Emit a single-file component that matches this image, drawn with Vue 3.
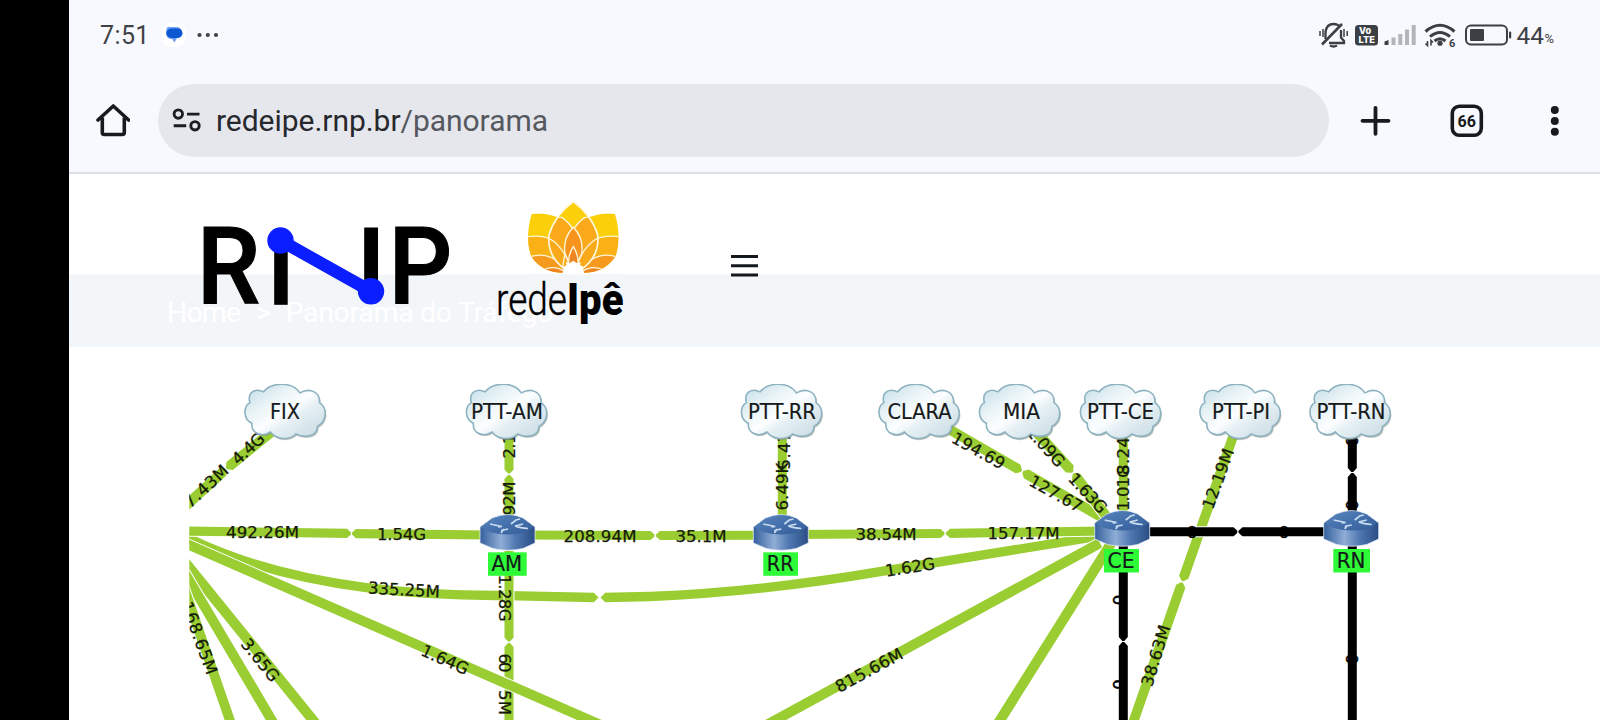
<script setup>
const clouds = [
  { x: 245, label: 'FIX', cx: 285, w: 30 },
  { x: 466.5, label: 'PTT-AM', cx: 507, w: 72 },
  { x: 741.5, label: 'PTT-RR', cx: 782, w: 68 },
  { x: 879, label: 'CLARA', cx: 919.5, w: 64 },
  { x: 979.5, label: 'MIA', cx: 1021.5, w: 37 },
  { x: 1080.5, label: 'PTT-CE', cx: 1120.5, w: 67 },
  { x: 1200, label: 'PTT-PI', cx: 1241, w: 58 },
  { x: 1310, label: 'PTT-RN', cx: 1351, w: 69 },
]

const routers = [
  { x: 480, y: 514, label: 'AM', lx: 488, ly: 552.3, lw: 38.7 },
  { x: 753.3, y: 514, label: 'RR', lx: 763.3, ly: 552.3, lw: 34.7 },
  { x: 1094.7, y: 510, label: 'CE', lx: 1104, ly: 549, lw: 35 },
  { x: 1323.7, y: 510, label: 'RN', lx: 1333.3, ly: 549, lw: 36.7 },
]

// One half of a link: a bar that runs from its node and ends in a blunt arrow.
function half(x1, y1, x2, y2, tip = 4) {
  const len = Math.hypot(x2 - x1, y2 - y1)
  const ux = (x2 - x1) / len
  const uy = (y2 - y1) / len
  const w = 4.5 + Math.abs(ux * uy) * 1.2
  const bx = x2 - ux * tip
  const by = y2 - uy * tip
  const e = tip ? 1 : w
  return [
    [x1 - uy * w, y1 + ux * w],
    [bx - uy * w, by + ux * w],
    [x2 - uy * e, y2 + ux * e],
    [x2 + uy * e, y2 - ux * e],
    [bx + uy * w, by - ux * w],
    [x1 + uy * w, y1 - ux * w],
  ].map((p) => p.map((n) => n.toFixed(1)).join(',')).join(' ')
}

const underHalves = [
  half(509, 551, 509, 641.5), half(509, 730, 509, 643),
]
const underLabels = [
  { t: '1.28G', x: 505, y: 598, a: 90, w: 47 },
  { t: '60', x: 505, y: 663, a: 90, w: 19 },
  { t: '5M', x: 505, y: 702.5, a: 90, w: 25 },
]
const greenHalves = [
  half(180, 511, 226, 469), half(275, 429, 226.5, 468.5),
  half(180, 531, 351, 533.4), half(490, 535, 352, 533.6),
  half(520, 535, 654.5, 535.5), half(770, 535.2, 656, 535.5),
  half(790, 534.5, 944.5, 533.5), half(1105, 531, 946, 533.4),
  half(180, 541, 610, 729, 0),
  half(176, 551, 325, 735, 0),
  half(176, 558, 281, 736, 0),
  half(182, 582, 236, 738, 0),
  half(1100, 543, 750, 734, 0),
  half(1112, 542, 992, 733, 0),
  half(940, 424, 1021.5, 471), half(1110, 522, 1022.8, 472),
  half(1030, 425, 1072.5, 472), half(1113, 525, 1073.5, 473.5),
  half(509, 430, 509, 473.5), half(509, 520, 509, 475),
  half(782.3, 430, 782.3, 520, 0),
  half(1123.3, 430, 1123.3, 520, 0),
  half(1235, 431, 1182.5, 581), half(1128, 737, 1182, 582.5),
]
const blackHalves = [
  half(1352.3, 430, 1352.3, 472), half(1352.3, 520, 1352.3, 473),
  half(1352.3, 540, 1352.3, 730, 0),
  half(1123.3, 540, 1123.3, 641), half(1123.3, 730, 1123.3, 642),
  half(1140, 531.7, 1237.5, 531.7), half(1330, 531.7, 1238.5, 531.7),
]

const zeroLabels = [
  { x: 1118.5, y: 600, a: 90 }, { x: 1118.5, y: 684.5, a: 90 },
  { x: 1192, y: 531.7, a: 0 }, { x: 1284, y: 531.7, a: 0 },
  { x: 1352.3, y: 441, a: 90 }, { x: 1352.3, y: 505, a: 90 },
  { x: 1352.3, y: 659, a: 90 },
]

const flowLabels = [
  { t: '7.43M', x: 206, y: 486, a: -43, w: 54 },
  { t: '4.4G', x: 248, y: 448.5, a: -43, w: 38 },
  { t: '492.26M', x: 262.5, y: 532, a: 0, w: 73 },
  { t: '1.54G', x: 401.5, y: 534, a: 0, w: 49 },
  { t: '208.94M', x: 600, y: 535.5, a: 0, w: 73 },
  { t: '35.1M', x: 701, y: 535.5, a: 0, w: 51 },
  { t: '38.54M', x: 886, y: 534, a: 0, w: 61 },
  { t: '157.17M', x: 1023.5, y: 532.5, a: 0, w: 72 },
  { t: '335.25M', x: 404, y: 589.5, a: 3, w: 72 },
  { t: '1.62G', x: 910, y: 567, a: -9, w: 50 },
  { t: '1.64G', x: 445, y: 659.5, a: 24, w: 50 },
  { t: '3.65G', x: 260.5, y: 660, a: 51, w: 50 },
  { t: '168.65M', x: 199.5, y: 638, a: 70, w: 76 },
  { t: '815.66M', x: 869, y: 670, a: -28.5, w: 74 },
  { t: '194.69', x: 978.5, y: 450.5, a: 29, w: 58 },
  { t: '127.67', x: 1056, y: 493.5, a: 29, w: 58 },
  { t: '1.09G', x: 1046, y: 446.5, a: 48, w: 48 },
  { t: '1.63G', x: 1088, y: 493, a: 47, w: 48 },
  { t: '2.1', x: 509, y: 446, a: -90, w: 25 },
  { t: '92M', x: 509, y: 498.5, a: -90, w: 34 },
  { t: '5.47', x: 783.5, y: 450.5, a: -90, w: 38 },
  { t: '6.49K', x: 782.3, y: 486.5, a: -90, w: 48 },
  { t: '8.24', x: 1123.3, y: 456, a: -90, w: 38 },
  { t: '1.01G', x: 1123.3, y: 488, a: -90, w: 46 },
  { t: '12.19M', x: 1218, y: 478.5, a: -70, w: 63 },
  { t: '38.63M', x: 1155.5, y: 655.5, a: -73, w: 63 },
]
</script>

<template>
  <div class="screen">
    <main class="phone">
      <div class="status">
        <span class="clock">7:51</span>
        <svg class="msg" width="26" height="26" viewBox="0 0 26 26">
          <rect x="1" y="1" width="24" height="24" rx="9" fill="#fff" />
          <path d="M9 5h6q6 0 6 5.500q0 5-5 5.500l-2.500 4.500-2.500-3.500H10q-5 0-5-6.500T9 5Z" fill="#6fa0f5" />
          <rect x="5.500" y="6.500" width="16" height="9.500" rx="4.800" fill="#0b57d0" />
        </svg>
        <svg class="more" width="24" height="6" viewBox="0 0 24 6" fill="#3f4247">
          <circle cx="3.500" cy="3" r="2.100" /><circle cx="11.800" cy="3" r="2.100" /><circle cx="20" cy="3" r="2.100" />
        </svg>
        <span class="grow"></span>
        <svg class="tray" width="240" height="30" viewBox="1316 20 240 30">
          <g fill="none" stroke="#3c3f44" stroke-width="2.300">
            <path d="M1325.500 39v-7q1-8 8-8 4.500 0 6.500 3" />
            <path d="M1329 43h15v-2l-3-3.500V30" />
            <path d="M1322 44.500l20-20.500" stroke-width="2.600" />
            <path d="M1330 45.500q3.500 2 7 0" />
            <path d="M1320 31v5M1323 29v8M1344 29v8M1347.200 31v5" stroke-width="1.500" />
          </g>
          <rect x="1355" y="25" width="23" height="20.500" rx="3.500" fill="#3c3f44" />
          <text x="1359" y="34" class="lte" textLength="12" lengthAdjust="spacingAndGlyphs">Vo</text>
          <text x="1358.500" y="43" class="lte" textLength="16.500" lengthAdjust="spacingAndGlyphs">LTE</text>
          <path d="M1384.500 45v-3.500l4-1.500v5Z" fill="#3c3f44" />
          <g fill="#b3b5ba">
            <rect x="1391.500" y="37.500" width="4" height="7.500" /><rect x="1398.300" y="34" width="4" height="11" />
            <rect x="1405" y="29.500" width="4" height="15.500" /><rect x="1411.700" y="25" width="4" height="20" />
          </g>
          <g fill="none" stroke="#3c3f44" stroke-width="3">
            <path d="M1425.500 31.500q14.500-12.500 29 0" /><path d="M1430 36.700q10-8.500 20 0" /><path d="M1434.500 41q5.500-4.500 11 0" />
          </g>
          <circle cx="1440" cy="43.200" r="2.600" fill="#3c3f44" />
          <path d="M1427.500 41v4.500l-2-2M1431 45.500v-5l2 2" fill="none" stroke="#3c3f44" stroke-width="1.600" />
          <text x="1449" y="46.500" class="six">6</text>
          <rect x="1466" y="25.500" width="41" height="19" rx="5" fill="none" stroke="#3c3f44" stroke-width="2" />
          <rect x="1470" y="29" width="14" height="12" rx="1" fill="#3c3f44" />
          <rect x="1509" y="31.500" width="2.200" height="7" rx="1" fill="#3c3f44" />
          <text x="1516.500" y="43.800" class="level" textLength="27.500" lengthAdjust="spacingAndGlyphs">44</text>
          <text x="1544.500" y="43.200" class="pct" textLength="9.500" lengthAdjust="spacingAndGlyphs">%</text>
        </svg>
      </div>

      <div class="toolbar">
        <svg class="home" width="34" height="36" viewBox="96 102.500 34 36" fill="none" stroke="#181a20" stroke-width="3.600" stroke-linejoin="round">
          <path d="M98 120.500l15.300-14L128.600 120.500" stroke-linecap="round" />
          <path d="M102.300 118v15q0 2 2 2h18q2 0 2-2v-15" />
        </svg>
        <div class="omnibox">
          <svg width="30" height="26" viewBox="171 107.700 30 26" fill="none" stroke="#1b1d22" stroke-width="2.900">
            <circle cx="178.300" cy="114.800" r="4.200" /><path d="M187 114.800h12.500M173.700 126.500h12.500" />
            <circle cx="195" cy="126.500" r="4.200" />
          </svg>
          <svg class="url" width="340" height="40" viewBox="0 0 340 40">
            <text x="0" y="31" textLength="332" lengthAdjust="spacing">redeipe.rnp.br<tspan class="path">/panorama</tspan></text>
          </svg>
        </div>
        <svg class="actions" width="240" height="40" viewBox="1330.200 99.700 240 40">
          <path d="M1376.700 107.500v26M1363.700 120.500h26" stroke="#181a20" stroke-width="3.800" stroke-linecap="round" />
          <rect x="1453.500" y="106" width="29" height="29" rx="7" fill="none" stroke="#181a20" stroke-width="3.600" />
          <text x="1468" y="126.700" text-anchor="middle" class="tabs" textLength="18.500" lengthAdjust="spacingAndGlyphs">66</text>
          <g fill="#181a20"><circle cx="1556" cy="109.700" r="4" /><circle cx="1556" cy="120.600" r="4" /><circle cx="1556" cy="131.500" r="4" /></g>
        </svg>
      </div>

      <header class="site">
        <svg width="1531" height="173" viewBox="69 174 1531 173">
          <rect x="69" y="274.500" width="1531" height="73" fill="#f3f6f9" />
          <g class="crumbs">
            <text x="167" y="321.500" textLength="74">Home</text>
            <text x="256" y="321.500">&gt;</text>
            <text x="285.500" y="321.500" textLength="268">Panorama do Tráfego</text>
          </g>
          <g class="rnp">
            <text transform="translate(196.800 304.300) scale(.94 1)">R</text>
            <rect x="274.200" y="240" width="13.500" height="64.800" />
            <rect x="364.200" y="227.500" width="13.800" height="64" />
            <text transform="translate(388.400 304.300) scale(.93 1)">P</text>
            <path d="M280.500 240.500L371 291.300" stroke="#0a1eff" stroke-width="12.500" />
            <circle cx="280.500" cy="240.500" r="13.200" fill="#0a1eff" />
            <circle cx="371" cy="291.300" r="13.200" fill="#0a1eff" />
          </g>
          <svg x="490" y="190" width="150" height="150" viewBox="0 0 450 450">
            <defs>
              <clipPath id="sideL"><path d="M125 72Q165 66 215 86Q260 130 280 240L215 248Q150 245 122 195Q105 140 125 72Z" /></clipPath>
              <clipPath id="sideR"><path d="M375 72Q335 66 285 86Q240 130 220 240L285 248Q350 245 378 195Q395 140 375 72Z" /></clipPath>
              <clipPath id="mid"><path d="M250 35Q305 75 323 135Q330 200 272 240H228Q170 200 177 135Q195 75 250 35Z" /></clipPath>
            </defs>
            <g v-for="s in ['L', 'R']" :key="s" :clip-path="`url(#side${s})`">
              <rect width="450" height="260" fill="#fbd00a" />
              <g :transform="s === 'R' ? 'translate(500 0) scale(-1 1)' : null" stroke="#fff6d8" stroke-width="4">
                <path d="M100 142Q190 125 230 190L300 260H90Z" fill="#f9b115" />
                <path d="M110 204Q165 180 215 222L260 260H90Z" fill="#f59a1e" />
                <path d="M155 242Q190 222 225 245L220 260H150Z" fill="#ef8423" />
              </g>
            </g>
            <g clip-path="url(#mid)">
              <rect width="450" height="260" fill="#fbd00a" />
              <g stroke="#fff6d8" stroke-width="4">
                <path d="M170 82H215Q275 120 284 260H170Z" fill="#f9a91a" />
                <path d="M330 82H285Q225 120 216 260H330Z" fill="#f9a91a" />
                <path d="M250 112Q282 145 275 190L250 250L225 190Q218 145 250 112Z" fill="#f7941e" />
                <path d="M170 140Q225 170 244 240M330 140Q275 170 256 240" fill="none" />
                <path d="M250 170Q270 200 262 240H238Q230 200 250 170Z" fill="#ee8523" />
              </g>
            </g>
            <path d="M250 35Q305 75 323 135Q330 200 272 240M228 240Q170 200 177 135Q195 75 250 35" fill="none" stroke="#fff8dc" stroke-width="5" />
            <path d="M216 258L222 232L214 234L230 225L228 215L239 220L250 212L261 220L272 215L270 225L286 234L278 232L284 258Z" fill="#fff" />
            <rect x="100" y="253" width="300" height="12" fill="#f3f6f9" />
          </svg>
          <text x="496" y="315.300" class="rede" textLength="71" lengthAdjust="spacingAndGlyphs">rede</text>
          <text x="567" y="315.300" class="ipe" textLength="56.500" lengthAdjust="spacingAndGlyphs">Ipê</text>
          <path d="M731 256.500h27M731 265.700h27M731 274.900h27" stroke="#14181f" stroke-width="3" />
        </svg>
      </header>

      <svg class="map" width="1531" height="373" viewBox="69 347 1531 373">
        <defs>
          <linearGradient id="sky" x1="0" y1="0" x2="1" y2="1">
            <stop offset="0" stop-color="#bfdbe6" /><stop offset=".32" stop-color="#eaf4f7" />
            <stop offset=".5" stop-color="#fcfeff" /><stop offset=".62" stop-color="#e6f0f4" /><stop offset="1" stop-color="#c3d8e0" />
          </linearGradient>
          <linearGradient id="body" x1="0" x2="1">
            <stop offset="0" stop-color="#35609c" /><stop offset=".38" stop-color="#8fadd6" />
            <stop offset=".65" stop-color="#5078b0" /><stop offset="1" stop-color="#2a4c85" />
          </linearGradient>
          <linearGradient id="lid" x1="0" x2="1" y2="1">
            <stop offset="0" stop-color="#5b86bf" /><stop offset=".5" stop-color="#4470ab" /><stop offset="1" stop-color="#335c98" />
          </linearGradient>
          <clipPath id="frame"><rect x="189.300" y="384" width="1300" height="340" /></clipPath>
          <g id="cloud">
            <path d="M5 19C2 8 11 4 19 8C27 -2 48 -3 56 9C67 3 77 9 76 19C85 25 83 39 74 43C74 53 62 56 52 51C45 58 32 57 26 49C17 55 6 50 7 40C-2 36 -2 23 5 19Z" fill="#85857a" opacity=".5" transform="translate(.8 1.300) scale(.985)" />
            <path d="M5 19C2 8 11 4 19 8C27 -2 48 -3 56 9C67 3 77 9 76 19C85 25 83 39 74 43C74 53 62 56 52 51C45 58 32 57 26 49C17 55 6 50 7 40C-2 36 -2 23 5 19Z" fill="url(#sky)" stroke="#8db2c0" stroke-width="1.600" transform="scale(.98)" />
          </g>
          <g id="router">
            <path d="M0 13L12 4Q28 -3 43 4L55 13V29L43 34.500Q28 38 13 34.500L0 29Z" fill="url(#body)" stroke="#dfe9f5" stroke-width=".8" />
            <path d="M1 13L12.500 4.500Q28 -2.500 42.500 4.500L54 13L46 18Q28 23 10 18Z" fill="url(#lid)" />
            <path d="M10 10l12 2.500M22 12.500l-4 .5M31 10l5-4 4-1M35 12q5 2 13 2.500M35 12l8-2M24 15l-3 4M21 16.500l7-1.500" stroke="#c9dbf0" stroke-width="1.700" fill="none" />
          </g>
        </defs>
        <g clip-path="url(#frame)">
          <path class="curve" d="M180 534Q300 596 500 595.500L594 597.500" />
          <path class="curve" d="M605 597.500L650 596.500Q760 592 880 571.700Q1000 552 1100 536" />
          <path d="M594 593l4.500 4.500-4.500 4.500ZM605 593l-4.500 4.500 4.500 4.500Z" fill="#9acd32" />
          <polygon v-for="(p, i) in underHalves" :key="'u' + i" class="green" :points="p" />
          <text v-for="l in underLabels" :key="l.t" class="flow" :transform="`translate(${l.x} ${l.y}) rotate(${l.a})`" y="6" :textLength="l.w">{{ l.t }}</text>
          <polygon v-for="(p, i) in greenHalves" :key="'g' + i" class="green" :points="p" />
          <text v-for="l in flowLabels" :key="l.t" class="flow" :transform="`translate(${l.x} ${l.y}) rotate(${l.a})`" y="6" :textLength="l.w">{{ l.t }}</text>
          <polygon v-for="(p, i) in blackHalves" :key="'b' + i" class="black" :points="p" />
          <text v-for="l in zeroLabels" :key="l.x + '-' + l.y" class="flow zero" :transform="`translate(${l.x} ${l.y}) rotate(${l.a})`" y="6">0</text>
          <g v-for="c in clouds" :key="c.label">
            <use href="#cloud" :x="c.x" y="384" />
            <text class="node" :x="c.cx" y="418.800" :textLength="c.w" lengthAdjust="spacingAndGlyphs">{{ c.label }}</text>
          </g>
          <g v-for="r in routers" :key="r.label">
            <use href="#router" :x="r.x" :y="r.y" />
            <rect :x="r.lx" :y="r.ly" :width="r.lw" height="23.500" fill="#2ffa38" />
            <text class="node" :x="r.lx + r.lw / 2 - 0.5" :y="r.ly + 18.500" :textLength="r.lw - 8" lengthAdjust="spacingAndGlyphs">{{ r.label }}</text>
          </g>
        </g>
      </svg>
    </main>
  </div>
</template>

<style>
body { margin: 0; background: #000; }
</style>

<style scoped>
.screen { width: 1600px; height: 720px; overflow: hidden; background: #000; padding-left: 69px; box-sizing: border-box; font-family: Roboto, sans-serif; }
.phone { display: flex; flex-direction: column; width: 1531px; height: 720px; background: #fff; }
.phone svg { display: block; flex: none; }
.status { display: flex; align-items: center; height: 70px; padding: 0 44px 0 31px; box-sizing: border-box; background: #f8f9ff; }
.clock { font-size: 25px; color: #3f4247; width: 61px; letter-spacing: 0.4px; }
.more { margin-left: 9px; }
.grow { flex: 1; }
.lte { font: 800 9.500px Inter, sans-serif; fill: #fff; }
.six { font: 700 11px Roboto, sans-serif; fill: #3c3f44; }
.level { font: 24.500px Roboto, sans-serif; fill: #3c3f44; }
.pct { font: 13px Roboto, sans-serif; fill: #3c3f44; }
.toolbar { display: flex; align-items: center; height: 104px; padding: 0 0 2px 27px; box-sizing: border-box; background: #f8f9ff; border-bottom: 2px solid #dcdfe4; }
.omnibox { display: flex; align-items: center; width: 1171.500px; height: 73px; margin-left: 27.500px; border-radius: 37px; background: #e6e7ec; padding-left: 13.500px; box-sizing: border-box; }
.url { margin-left: 15px; font-size: 30px; fill: #26282e; }
.path { fill: #55585f; }
.tabs { font: 700 16.500px Roboto, sans-serif; fill: #181a20; }
.site { height: 173px; }
.crumbs { font-size: 28.500px; fill: #fff; }
.rnp { font-size: 107.500px; font-weight: 500; fill: #000; }
.rnp text { stroke: #000; stroke-width: 1; }
.rede { font-size: 44px; font-weight: 300; stroke: #000; stroke-width: 0.4; }
.ipe { font-size: 44px; font-weight: 900; }
.curve { fill: none; stroke: #9acd32; stroke-width: 9.300; }
.green { fill: #9acd32; stroke: #fff; stroke-width: 2; paint-order: stroke; }
.black { fill: #000; stroke: #fff; stroke-width: 2; paint-order: stroke; }
.flow { font: 16.600px "DejaVu Sans", sans-serif; fill: #151a08; stroke: #151a08; stroke-width: 0.25; text-anchor: middle; }
.zero { fill: #000; stroke: #000; stroke-width: 0.5; }
.node { font: 20.800px "DejaVu Sans", sans-serif; fill: #16191a; stroke: #16191a; stroke-width: 0.2; text-anchor: middle; }
</style>
